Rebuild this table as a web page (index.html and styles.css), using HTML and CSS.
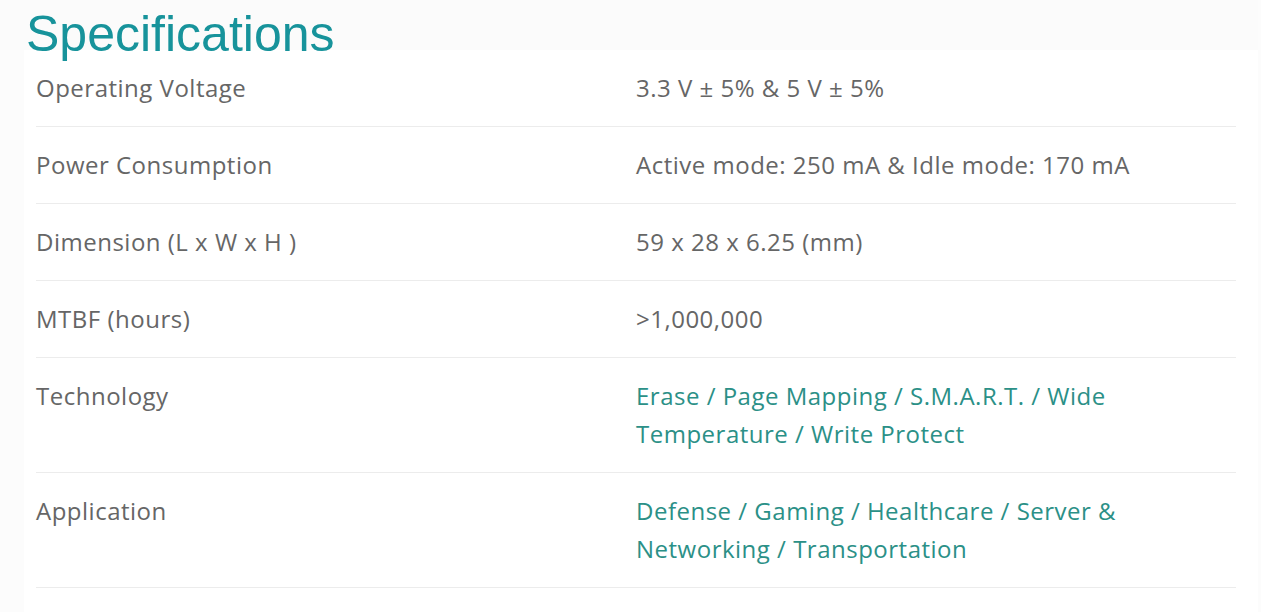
FILE: index.html
```html
<!DOCTYPE html>
<html lang="en">
<head>
    <meta charset="UTF-8">
    <meta name="viewport" content="width=device-width, initial-scale=1.0">
    <title>Specifications</title>
    <link rel="stylesheet" href="styles.css">
</head>
<body>
    <div class="page-head">
        <h1 class="title">Specifications</h1>
    </div>

    <div class="content">
        <div class="spec-table">
            <div class="spec-row">
                <div class="spec-name">Operating Voltage</div>
                <div class="spec-value">3.3 V ± 5% &amp; 5 V ± 5%</div>
            </div>
            <div class="spec-row">
                <div class="spec-name">Power Consumption</div>
                <div class="spec-value">Active mode: 250 mA &amp; Idle mode: 170 mA</div>
            </div>
            <div class="spec-row">
                <div class="spec-name">Dimension (L x W x H )</div>
                <div class="spec-value">59 x 28 x 6.25 (mm)</div>
            </div>
            <div class="spec-row">
                <div class="spec-name">MTBF (hours)</div>
                <div class="spec-value">&gt;1,000,000</div>
            </div>
            <div class="spec-row">
                <div class="spec-name">Technology</div>
                <div class="spec-value link">Erase / Page Mapping / S.M.A.R.T. / Wide Temperature / Write Protect</div>
            </div>
            <div class="spec-row">
                <div class="spec-name">Application</div>
                <div class="spec-value link">Defense / Gaming / Healthcare / Server &amp; Networking / Transportation</div>
            </div>
        </div>
    </div>
</body>
</html>
```

FILE: styles.css
```css
body {
    margin: 0;
    background-color: #fcfcfc;
    font-family: "Open Sans", sans-serif;
}

.page-head {
    height: 50px;
    width: 1258px;
    background-color: #fbfbfb;
}

.title {
    margin: 0;
    padding-left: 26px;
    font-family: "Liberation Sans", Arial, sans-serif;
    font-weight: normal;
    font-size: 50px;
    line-height: 68px;
    color: #17939b;
}

.content {
    margin-left: 24px;
    width: 1234px;
    min-height: 562px;
    background-color: white;
}

.spec-table {
    margin-left: 12px;
    width: 1200px;
}

.spec-row {
    display: flex;
    border-bottom: 1px solid #ececec;
    padding: 19px 0;
}

.spec-name,
.spec-value {
    width: 600px;
    font-size: 24px;
    letter-spacing: 0.5px;
    line-height: 38px;
    color: #666;
}

.spec-value {
    padding-right: 80px;
    box-sizing: border-box;
}

.spec-value.link {
    color: #2b9087;
}
```
